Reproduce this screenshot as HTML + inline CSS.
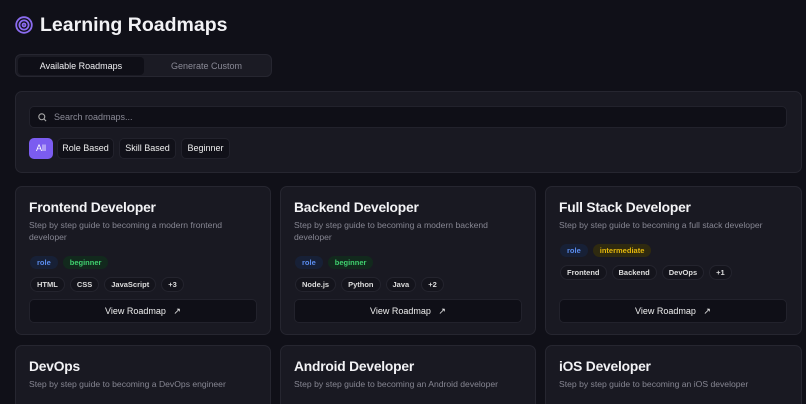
<!DOCTYPE html><html style="width:806px;height:404px;overflow:hidden"><head><style>
*{box-sizing:border-box;margin:0;padding:0}
body{width:806px;height:404px;overflow:hidden;background:#101018;font-family:"Liberation Sans",sans-serif;color:#f2f2f5;position:relative}
.abs{position:absolute}
h1{position:absolute;left:40px;top:14px;font-size:19.5px;font-weight:700}
.tabs{left:15px;top:54px;width:257px;height:23px;background:#1b1b24;border:1px solid #262630;border-radius:6px}
.tab{position:absolute;top:2px;height:18px;border-radius:4px;font-size:9px;line-height:18px;text-align:center}
.panel{left:15px;top:91px;width:787px;height:82px;background:#191922;border:1px solid #262630;border-radius:7px}
.search{left:13px;top:14px;width:758px;height:22px;background:#0f0f17;border:1px solid #22222c;border-radius:5px;font-size:9px;color:#8a8a96;line-height:20px;padding-left:24px}
.chip{position:absolute;top:46px;height:21px;border-radius:5px;background:#111119;border:1px solid #22222c;font-size:9px;line-height:19px;text-align:center;color:#eee}
.card{position:absolute;width:256px;height:149px;background:#191922;border:1px solid #262630;border-radius:7px}
.card.r2{height:59px;border-bottom:none;border-radius:7px 7px 0 0}
.card h2{position:absolute;left:13px;top:13px;font-size:13.8px;font-weight:600;letter-spacing:-0.2px}
.card p{position:absolute;left:13px;top:32px;width:205px;font-size:8.6px;line-height:12px;color:#868692}
.tags{position:absolute;left:14px;display:flex;gap:5px}
.b{height:13px;border-radius:7px;font-size:7.5px;line-height:13px;padding:0 7px;font-weight:700}
.role{background:#172036;color:#5b8def}
.beg{background:#12291d;color:#3fcf6e}
.int{background:#2f2a10;color:#e5b80b}
.t{height:15px;border-radius:8px;border:1px solid #24242e;background:#14141c;font-size:7.5px;line-height:13px;padding:0 6px;font-weight:700;color:#ddd}
.btn{position:absolute;left:13px;width:228px;height:24px;background:#0f0f17;border:1px solid #22222c;border-radius:5px;font-size:9px;line-height:22px;text-align:center;color:#eee}
</style></head><body>
<svg class="abs" style="left:15px;top:16px" width="18" height="18" viewBox="0 0 18 18" fill="none" stroke="#8b6cf0" stroke-width="1.8"><circle cx="9" cy="9" r="7.8"/><circle cx="9" cy="9" r="4.6"/><circle cx="9" cy="9" r="1.5"/></svg>
<h1>Learning Roadmaps</h1>
<div class="abs tabs"><div class="tab" style="left:2px;width:126px;background:#0f0f17">Available Roadmaps</div><div class="tab" style="left:128px;width:125px;color:#8a8a96">Generate Custom</div></div>
<div class="abs panel">
<div class="abs search"><svg class="abs" style="left:8px;top:6px" width="9" height="9" viewBox="0 0 10 10" fill="none" stroke="#aaa" stroke-width="1.2"><circle cx="4.2" cy="4.2" r="3.3"/><path d="M6.7 6.7L9 9"/></svg>Search roadmaps...</div>
<div class="chip" style="left:13px;width:24px;background:#7b5cf0;border-color:#7b5cf0;color:#fff">All</div>
<div class="chip" style="left:41px;width:57px">Role Based</div>
<div class="chip" style="left:103px;width:57px">Skill Based</div>
<div class="chip" style="left:165px;width:49px">Beginner</div>
</div>

<div class="card" style="left:15px;top:186px"><h2>Frontend Developer</h2><p>Step by step guide to becoming a modern frontend developer</p>
<div class="tags" style="top:69px"><span class="b role">role</span><span class="b beg">beginner</span></div>
<div class="tags" style="top:90px"><span class="t">HTML</span><span class="t">CSS</span><span class="t">JavaScript</span><span class="t">+3</span></div>
<div class="btn" style="top:112px">View Roadmap &nbsp;&nbsp;↗</div></div>

<div class="card" style="left:280px;top:186px"><h2>Backend Developer</h2><p>Step by step guide to becoming a modern backend developer</p>
<div class="tags" style="top:69px"><span class="b role">role</span><span class="b beg">beginner</span></div>
<div class="tags" style="top:90px"><span class="t">Node.js</span><span class="t">Python</span><span class="t">Java</span><span class="t">+2</span></div>
<div class="btn" style="top:112px">View Roadmap &nbsp;&nbsp;↗</div></div>

<div class="card" style="left:545px;top:186px;width:257px"><h2>Full Stack Developer</h2><p style="width:240px">Step by step guide to becoming a full stack developer</p>
<div class="tags" style="top:57px"><span class="b role">role</span><span class="b int">intermediate</span></div>
<div class="tags" style="top:78px"><span class="t">Frontend</span><span class="t">Backend</span><span class="t">DevOps</span><span class="t">+1</span></div>
<div class="btn" style="top:112px">View Roadmap &nbsp;&nbsp;↗</div></div>

<div class="card r2" style="left:15px;top:345px"><h2>DevOps</h2><p style="width:240px">Step by step guide to becoming a DevOps engineer</p></div>
<div class="card r2" style="left:280px;top:345px"><h2>Android Developer</h2><p style="width:240px">Step by step guide to becoming an Android developer</p></div>
<div class="card r2" style="left:545px;top:345px;width:257px"><h2>iOS Developer</h2><p style="width:240px">Step by step guide to becoming an iOS developer</p></div>
</body></html>
